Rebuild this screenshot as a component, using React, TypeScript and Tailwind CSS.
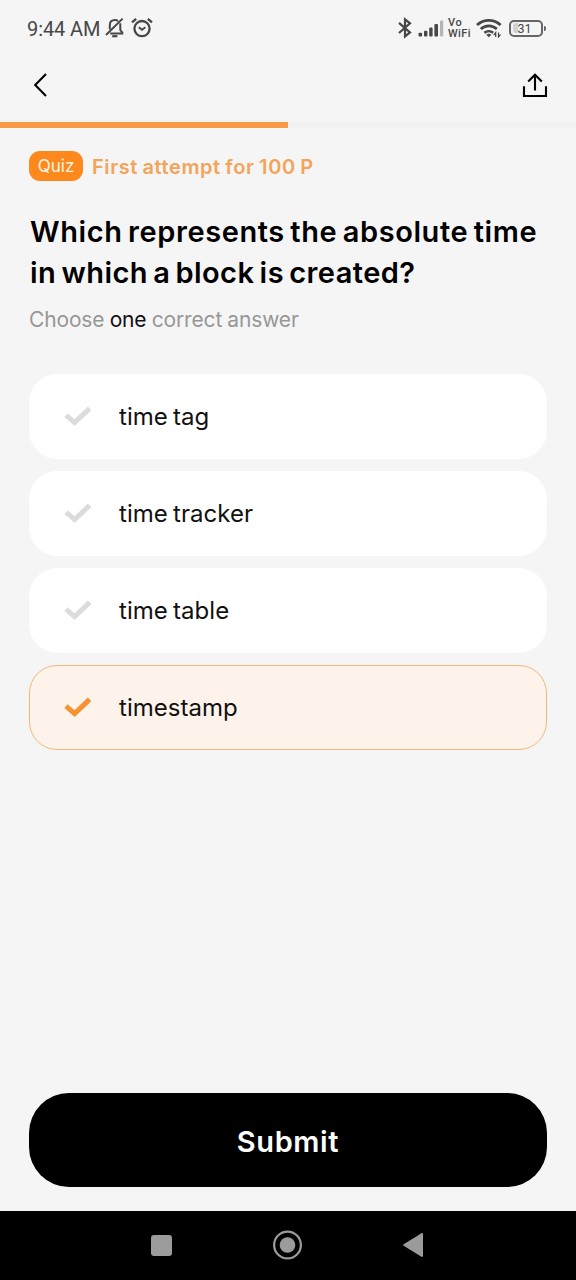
import React from "react";
import clsx from "clsx";

const options = [
  { label: "time tag", selected: false },
  { label: "time tracker", selected: false },
  { label: "time table", selected: false },
  { label: "timestamp", selected: true },
];

function StatusBar() {
  return (
    <div className="flex h-14 items-center justify-between pl-[27px] pr-[30px] text-[#474747]">
      <div className="flex items-center font-[Roboto,sans-serif]">
        <span className="w-[78px] whitespace-nowrap pt-0.5 text-[20px] leading-6 tracking-[-0.1px]">
          9:44 AM
        </span>
        {/* muted bell */}
        <svg className="h-[22px] w-5" viewBox="0 0 20 22" fill="none" stroke="currentColor" strokeWidth="2">
          <path d="M4.8 12.5V8.3C4.8 5 7 3.1 10 3.1c1.3 0 2.2.3 3.1.9M15.3 6.2V13l2 2.6v.8H5.2" />
          <path d="M1 18 17.6 1.6" />
          <path d="M7.2 19.2h5.2" strokeWidth="2.2" />
        </svg>
        <svg className="ml-[6px] h-[22px] w-[22px]" viewBox="0 0 22 22" fill="none" stroke="currentColor" strokeWidth="2.3">
          <circle cx="11" cy="11.6" r="7.6" />
          <path d="M7.8 10.2 11 12.8l3.4-2.6" strokeWidth="1.8" />
          <path d="M1 5.4 5.2 1.8M21 5.4l-4.2-3.6" />
        </svg>
      </div>

      <div className="flex items-center">
        <svg className="h-[22px] w-[14px]" viewBox="0 0 14 22" fill="none" stroke="currentColor" strokeWidth="2.2">
          <path d="M1 5.8 12 15.4 7 19.4V2.4l5 4L1 16" />
        </svg>
        <svg className="ml-[6px] h-[17px] w-[26px]" viewBox="0 0 26 17" fill="currentColor">
          <rect x="0.5" y="12.8" width="3.6" height="3.6" rx="1" />
          <rect x="6" y="10.8" width="3.4" height="5.6" rx="1" />
          <rect x="11.2" y="7.4" width="3.4" height="9" rx="1" />
          <rect x="16.4" y="4" width="3.6" height="12.4" rx="1" />
          <rect x="22" y="0.6" width="3.2" height="15.8" rx="1" fill="#b5b5b5" />
        </svg>
        <div className="ml-1 w-[24px] font-[Roboto,sans-serif] text-[11px] font-medium leading-[11.5px]">
          <div className="tracking-[0.6px]">Vo</div>
          <div className="whitespace-nowrap tracking-[0.4px]">WiFi</div>
        </div>
        <svg className="ml-1 h-5 w-[26px]" viewBox="0 0 26 20" fill="none" stroke="currentColor" strokeWidth="2.9">
          <path d="M1 7c6.8-6.2 16.8-6.2 23.6 0" />
          <path d="M4.8 11c4.6-4.2 11.4-4.2 16 0" />
          <path d="M8.4 14.8c2.6-2.2 6.2-2.2 8.8 0" strokeWidth="2.5" />
          <path d="m10.2 16.8 2.6-1.3 2.6 1.3-2.6 2.4z" fill="currentColor" stroke="none" />
          <path d="M19.7 19v-4.4l-2 2.6M22.5 14.6V19l2-2.6" strokeWidth="1.2" />
        </svg>
        <div className="ml-[7px] flex h-[17px] w-[34px] items-center rounded-[5px] border-2 border-[#666] p-[1.5px]">
          <div className="h-full w-[5px] rounded-l-[3px] bg-[#d2d2d2]" />
          <span className="pt-px font-[Roboto,sans-serif] text-[12.5px] leading-3">31</span>
        </div>
        <div className="ml-px h-[5px] w-[2px] rounded-r bg-[#606060]" />
      </div>
    </div>
  );
}

function Header() {
  return (
    <header className="flex h-[65.5px] items-start justify-between px-7 pt-[15px] text-black">
      <svg className="h-7 w-6" viewBox="0 0 24 28" fill="none" stroke="currentColor" strokeWidth="2.1">
        <path d="M18 3 7.2 14 18 25" />
      </svg>
      <svg className="h-7 w-[26px]" viewBox="0 0 26 28" fill="none" stroke="currentColor" strokeWidth="2.1">
        <path d="M13 19.5V4M6.2 10.6 13 3.8l6.8 6.8M2 15.3v9.7h22v-9.7" />
      </svg>
    </header>
  );
}

function Option({ label, selected }: { label: string; selected: boolean }) {
  return (
    <li
      className={clsx(
        "flex h-[85px] items-center rounded-[28px] border-[1.5px] pl-[34px]",
        selected ? "border-[#efb77c] bg-[#fef3ea]" : "border-white bg-white"
      )}
    >
      <svg
        className={clsx("h-5 w-7", selected ? "text-[#f59231]" : "text-[#dcdcdc]")}
        viewBox="0 0 28 20"
        fill="none"
        stroke="currentColor"
        strokeWidth="5"
      >
        <path d="m2 9.2 8.6 7.4L25.6 2.4" />
      </svg>
      <span className="ml-[27px] pt-0.5 text-[24px] leading-8 tracking-[0.03px] text-[#111] [word-spacing:-1.5px]">
        {label}
      </span>
    </li>
  );
}

function NavBar() {
  return (
    <nav className="flex h-[69.5px] items-center justify-between bg-black pl-[151px] pr-[153px] text-[#9b9b9b]">
      <div className="h-[21px] w-[21px] rounded-[3px] bg-current" />
      <svg className="h-[30px] w-[30px]" viewBox="0 0 30 30" fill="none">
        <circle cx="14.5" cy="15" r="13.4" stroke="currentColor" strokeWidth="2.2" />
        <circle cx="14.5" cy="15" r="7.8" fill="currentColor" />
      </svg>
      <svg className="h-6 w-5" viewBox="0 0 20 24" fill="currentColor" stroke="currentColor" strokeWidth="2" strokeLinejoin="round">
        <path d="M1.2 12 19 1v22z" />
      </svg>
    </nav>
  );
}

export default function App() {
  return (
    <div className="flex h-[1280px] w-[576px] flex-col overflow-hidden bg-[#f5f5f5] font-[Inter,sans-serif]">
      <StatusBar />
      <Header />
      <div className="h-[6px] bg-[#f2f2f2]">
        <div className="h-full w-1/2 bg-[#f99a46]" />
      </div>

      <main className="flex flex-1 flex-col px-[29px] pt-[23.5px]">
        <div className="flex items-center gap-[9px]">
          <span className="flex h-[30px] w-[54px] items-center justify-center rounded-[11px] bg-[#fd881b] pt-0.5 text-[17px] text-[#fff3e3]">
            Quiz
          </span>
          <span className="whitespace-nowrap pt-0.5 text-[20px] font-semibold leading-7 tracking-[0.58px] text-[#f3a45a] [word-spacing:-1px]">
            First attempt for 100 P
          </span>
        </div>

        <h1 className="mt-[29.5px] whitespace-nowrap pl-px text-[29px] font-semibold leading-[41px] text-black [word-spacing:-2.5px]">
          <span className="block tracking-[0.6px]">Which represents the absolute time</span>
          <span className="block tracking-[0.43px]">in which a block is created?</span>
        </h1>
        <p className="mt-3 whitespace-nowrap text-[21px] leading-[30px] tracking-[-0.15px] text-[#979797] [word-spacing:-0.5px]">
          Choose <span className="text-[#111]">one</span> correct answer
        </p>

        <ul className="mt-[39px] flex flex-col gap-3">
          {options.map((option) => (
            <Option key={option.label} {...option} />
          ))}
        </ul>

        <button className="mb-[23.5px] mt-auto h-[94px] w-full rounded-[40px] bg-black pt-1 text-[29px] font-semibold tracking-[0.6px] text-white">
          Submit
        </button>
      </main>
      <NavBar />
    </div>
  );
}
